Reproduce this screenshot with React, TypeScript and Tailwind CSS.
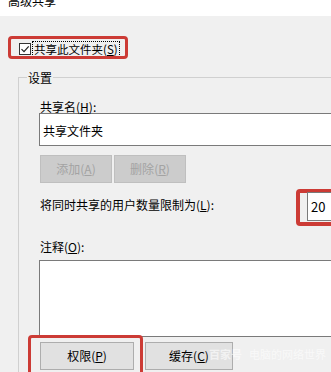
import React from 'react';

const Key: React.FC<{ k: string }> = ({ k }) => (
  <>
    (<span className="underline underline-offset-[1px]">{k}</span>)
  </>
);

const App: React.FC = () => {
  return (
    <div className="relative w-[331px] h-[372px] overflow-hidden bg-[#f0f0f0] text-[#000] text-[12px] font-['Noto_Sans_CJK_SC',sans-serif]">
      {/* window title, mostly cut off */}
      <div className="h-[16px] bg-white pl-[8px] overflow-hidden">
        <div className="-mt-[5px] leading-[12px] text-[12px]">高级共享</div>
      </div>

      {/* share checkbox */}
      <div className="mt-[25px] ml-[19px] flex">
        <label className="relative flex items-center h-[16px]">
          <span className="absolute -left-[11px] -top-[5px] -right-[8px] -bottom-[2px] border-[3px] border-[#cc3b35] rounded-[4px]" />
          <span className="w-[12px] h-[12px] border border-[#333333] bg-white flex items-center justify-center">
            <svg width="10" height="10" viewBox="0 0 10 10">
              <path d="M1.5 5.2 L4 7.7 L8.7 2.3" fill="none" stroke="#222" strokeWidth="1.2" />
            </svg>
          </span>
          <span className="ml-[1px] h-[16px] px-[1px] border border-dotted border-[#000] flex items-center text-[11.5px] leading-[14px]">
            共享此文件夹<Key k="S" />
          </span>
        </label>
      </div>

      {/* settings group */}
      <div className="relative mt-[20px] ml-[18px] w-[500px] h-[400px] border border-[#d0d0d0] pl-[21px] pt-[23px]">
        <span className="absolute left-[8px] -top-[8px] px-[1px] bg-[#f0f0f0] leading-[16px]">设置</span>

        <div className="leading-[12px]">
          共享名<Key k="H" />:
        </div>
        <div className="-ml-[1px] h-[33px] w-[400px] border border-[#7a7a7a] bg-white flex items-center pl-[3px] pt-[3px]">
          共享文件夹
        </div>

        <div className="mt-[9px] flex gap-[2px]">
          <button className="w-[72px] h-[28px] bg-[#cccccc] border border-[#bfbfbf] text-[#a3a3a3]">
            添加<Key k="A" />
          </button>
          <button className="w-[72px] h-[28px] bg-[#cccccc] border border-[#bfbfbf] text-[#a3a3a3]">
            删除<Key k="R" />
          </button>
        </div>

        <div className="mt-[6px] flex items-start">
          <div className="w-[256px] mt-[8px] leading-[16px]">
            将同时共享的用户数量限制为<Key k="L" />:
          </div>
          <div className="h-[37px] w-[100px] border-[4px] border-[#cc3b35] rounded-[4px] pl-[7px]">
            <div className="h-[29px] w-[90px] -mt-[1px] border border-[#7a7a7a] bg-white flex items-center pl-[3px] text-[13px]">
              20
            </div>
          </div>
        </div>

        <div className="mt-[13px] leading-[16px]">
          注释<Key k="O" />:
        </div>
        <div className="mt-[5px] -ml-[1px] h-[77px] w-[400px] border border-[#7a7a7a] bg-white" />

        <div className="mt-[5px] flex">
          <div className="relative">
            <span className="absolute -left-[12px] -top-[7px] -right-[9px] -bottom-[20px] border-[3px] border-[#cc3b35] rounded-[4px]" />
            <button className="w-[94px] h-[28px] bg-[#e1e1e1] border border-[#adadad]">
              权限<Key k="P" />
            </button>
          </div>
          <button className="ml-[11px] w-[88px] h-[28px] bg-[#e1e1e1] border border-[#adadad]">
            缓存<Key k="C" />
          </button>
        </div>
      </div>

      {/* watermark */}
      <div className="absolute left-[209px] top-[347px] flex items-center gap-[7px] text-[11px] leading-[14px] text-white/60">
        <span className="font-bold">百家号</span>
        <span>电脑的网络世界</span>
      </div>
    </div>
  );
};

export default App;
